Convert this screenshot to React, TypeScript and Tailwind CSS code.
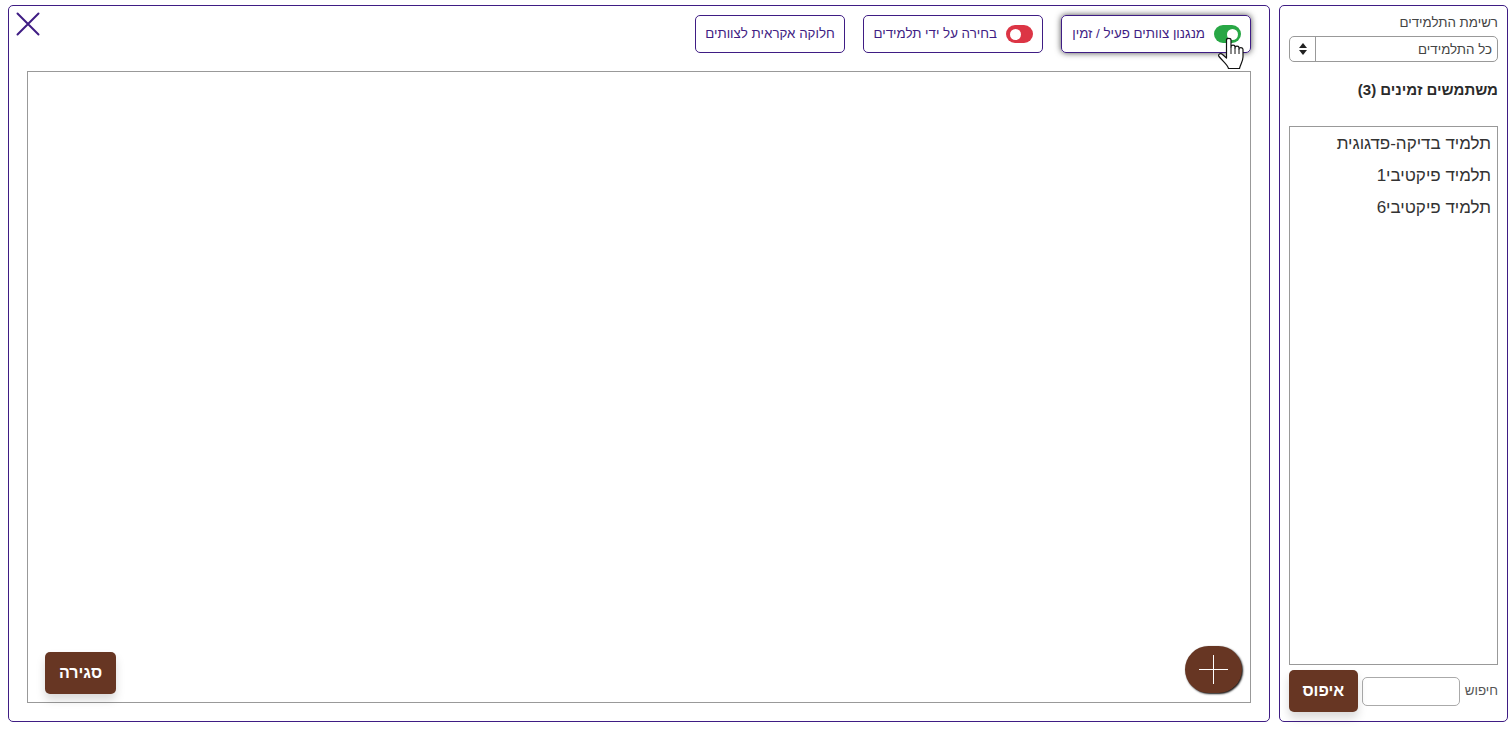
const font = { fontFamily: '"Liberation Sans", Arial, sans-serif' };

// Toggle pill used in the top buttons
const Toggle = ({ on }: { on: boolean }) => (
  <span className={`flex h-[18px] w-[27px] shrink-0 items-center rounded-full px-[3.5px] ${on ? "justify-end bg-[#28a745]" : "justify-start bg-[#dc3545]"}`} dir="ltr">
    <span className="block h-[11px] w-[11px] rounded-full bg-white" />
  </span>
);

const students = ["תלמיד בדיקה-פדגוגית", "תלמיד פיקטיבי1", "תלמיד פיקטיבי6"];

const HandCursor = () => (
  <svg className="absolute left-[1218px] top-[37px] z-10" width="27" height="33" viewBox="0 0 27 33">
    <path
      d="M8.500 3C8.500 .8 13 .8 13 3V10C13 7.500 17 7.500 17 10V11C17 8.500 21 8.500 21 11V12C21 10 25 10 25 12.500V20C25 24 22.500 27 21.500 31.500H10.500C9.500 27.500 6 25.500 1 19.500C-.5 17.500 2.500 15.500 4.500 17.500L8.500 21Z"
      fill="#fff"
      stroke="#111"
      strokeWidth="1.200"
      strokeLinejoin="round"
    />
    <path d="M13 10V17M17 11V17M21 12V17" stroke="#111" strokeWidth="1" fill="none" />
  </svg>
);

export default function App() {
  return (
    <div dir="rtl" style={font} className="relative flex h-[730px] w-[1508px] gap-[9px] bg-white pb-2 pl-2 pt-[5px] text-[#212529]">
      {/* students column */}
      <aside className="flex h-[717px] w-[229px] shrink-0 flex-col rounded-[5px] border border-[#3f1d84] px-[9px] pb-[9px] pt-[7px]">
        <div className="h-[20px] text-[13.33px] leading-[20px] text-[#444]">רשימת התלמידים</div>
        <div className="mt-[3px] flex h-[26px] items-stretch rounded-[5px] border border-[#999] text-[13.33px]">
          <div className="flex-1 pr-[5px] leading-[26px] text-[#444]">כל התלמידים</div>
          <div className="flex w-[26px] flex-col items-center justify-center gap-[2px] border-r border-[#999]">
            <span className="block h-0 w-0 border-x-[4.500px] border-b-[5px] border-x-transparent border-b-[#222]" />
            <span className="block h-0 w-0 border-x-[4.500px] border-t-[5px] border-x-transparent border-t-[#222]" />
          </div>
        </div>
        <div className="mt-[18px] h-[20px] text-[15px] font-bold leading-[20px] text-[#2b2b2b]">משתמשים זמינים (3)</div>
        <div className="mt-[26px] h-[539px] border border-[#999] pt-[1px]">
          {students.map((s) => (
            <div key={s} className="h-[32px] pr-[6px] text-[17px] leading-[32px] text-[#333]">{s}</div>
          ))}
        </div>
        <div className="mt-[5px] flex items-center">
          <span className="text-[13.33px] text-[#555]">חיפוש</span>
          <input className="mr-[5px] h-[29px] w-[98px] rounded-[5px] border border-[#aaa] bg-white" />
          <button className="mr-[4px] h-[42px] w-[69px] rounded-[5px] bg-[#673623] text-[16px] font-bold text-white shadow-[0_6px_10px_rgba(0,0,0,0.15)]">איפוס</button>
        </div>
      </aside>

      {/* teams panel */}
      <main className="relative flex h-[717px] w-[1262px] shrink-0 flex-col rounded-[5px] border border-[#3f1d84] pl-[18px] pr-[18px] pt-[9px]">
        <div className="flex h-[38px] gap-[18px] text-[13.33px] text-[#3f1d84]">
          <button className="flex h-[38px] w-[190px] items-center gap-[9px] whitespace-nowrap rounded-[5px] border border-[#3f1d84] px-[9px] shadow-[0_0_6px_rgba(0,0,0,0.7)]">
            <Toggle on />
            <span>מנגנון צוותים פעיל / זמין</span>
          </button>
          <button className="flex h-[38px] w-[180px] items-center gap-[9px] whitespace-nowrap rounded-[5px] border border-[#3f1d84] px-[9px]">
            <Toggle on={false} />
            <span>בחירה על ידי תלמידים</span>
          </button>
          <button className="h-[38px] w-[150px] whitespace-nowrap rounded-[5px] border border-[#3f1d84] px-[9px]">חלוקה אקראית לצוותים</button>
        </div>
        <div className="relative mt-[18px] h-[632px] w-[1224px] border border-[#999]">
          <button className="absolute bottom-[8px] left-[17px] h-[42px] w-[71px] rounded-[5px] bg-[#673623] text-[16px] font-bold text-white shadow-[0_6px_10px_rgba(0,0,0,0.15)]">סגירה</button>
          <button className="absolute bottom-[9px] right-[8px] flex h-[47px] w-[57px] items-center justify-center rounded-full bg-[#673623] shadow-[1px_1px_2px_rgba(0,0,0,0.95)]">
            <svg width="29" height="29" viewBox="0 0 29 29" shapeRendering="crispEdges">
              <path d="M14.500 0v29M0 14.500h29" stroke="#fff" strokeWidth="1" />
            </svg>
          </button>
        </div>
        <svg className="absolute left-[7px] top-[6px]" width="24" height="24" viewBox="0 0 24 24">
          <path d="M1.500 1.500l21 21M22.500 1.500l-21 21" stroke="#3f1d84" strokeWidth="2" strokeLinecap="round" />
        </svg>
      </main>
      <HandCursor />
    </div>
  );
}
